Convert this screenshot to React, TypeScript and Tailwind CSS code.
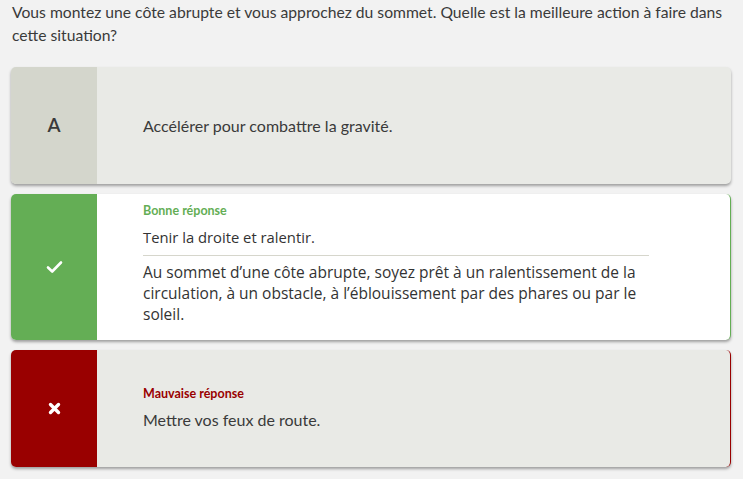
import React from 'react';

const CheckIcon = () => (
  <svg width="17" height="14" viewBox="0 0 17 14" fill="none">
    <path d="M2 7.5 L6.2 11.5 L15 2.5" stroke="white" strokeWidth="2.6" strokeLinecap="round" strokeLinejoin="round" />
  </svg>
);

const CrossIcon = () => (
  <svg width="13" height="13" viewBox="0 0 13 13" fill="none">
    <path d="M2.5 2.5 L10.5 10.5 M10.5 2.5 L2.5 10.5" stroke="white" strokeWidth="3.4" strokeLinecap="round" />
  </svg>
);

const App: React.FC = () => {
  return (
    <div className="min-h-[479px] bg-[#f2f2f2] pl-[11px] pr-[12px] pt-[1px] pb-4 font-['Lato','Liberation_Sans',sans-serif] text-[#3a3a3a]">
      {/* Question */}
      <p className="pl-[1px] -mr-[12px] text-[15.7px] leading-[23px] text-[#3a3a3a] mb-[20px]">
        Vous montez une côte abrupte et vous approchez du sommet. Quelle est la meilleure action à faire dans
        cette situation?
      </p>

      <div className="flex flex-col gap-[10px]">
        {/* Option A - neutral */}
        <div className="flex h-[117px] rounded-[5px] overflow-hidden bg-[#e9eae6] shadow-[0_2px_3px_rgba(0,0,0,0.35)]">
          <div className="w-[86px] shrink-0 bg-[#d4d6cc] flex items-center justify-center text-[19px] font-semibold text-[#3a3a3a]">
            A
          </div>
          <div className="flex items-center pl-[46px] text-[16px]">
            Accélérer pour combattre la gravité.
          </div>
        </div>

        {/* Option B - correct */}
        <div className="flex h-[146px] rounded-[5px] overflow-hidden bg-white border-r border-[#64ae55] shadow-[0_2px_3px_rgba(0,0,0,0.35)]">
          <div className="w-[86px] shrink-0 bg-[#64ae55] flex items-center justify-center">
            <CheckIcon />
          </div>
          <div className="pl-[46px] pt-[10px] w-[552px]">
            <div className="text-[12.5px] leading-[14px] font-bold text-[#64ae55]">Bonne réponse</div>
            <div className="mt-[7px] text-[14.8px] leading-[24px] font-['Open_Sans',sans-serif] text-[#333] pb-[6px] border-b border-[#d6d6cc]">
              Tenir la droite et ralentir.
            </div>
            <p className="pt-[6px] text-[15.5px] leading-[21px] font-['Open_Sans',sans-serif] text-[#333]">
              Au sommet d’une côte abrupte, soyez prêt à un ralentissement de la circulation, à un obstacle, à
              l’éblouissement par des phares ou par le soleil.
            </p>
          </div>
        </div>

        {/* Option C - wrong */}
        <div className="flex h-[117px] rounded-[5px] overflow-hidden bg-[#e9eae6] border-r border-[#990000] shadow-[0_2px_3px_rgba(0,0,0,0.35)]">
          <div className="w-[86px] shrink-0 bg-[#990000] flex items-center justify-center">
            <CrossIcon />
          </div>
          <div className="flex flex-col justify-center pl-[46px] pt-[2px]">
            <div className="text-[12.5px] leading-[14px] font-bold text-[#990000]">Mauvaise réponse</div>
            <div className="mt-[7px] text-[16px] leading-[24px]">Mettre vos feux de route.</div>
          </div>
        </div>
      </div>
    </div>
  );
};

export default App;
